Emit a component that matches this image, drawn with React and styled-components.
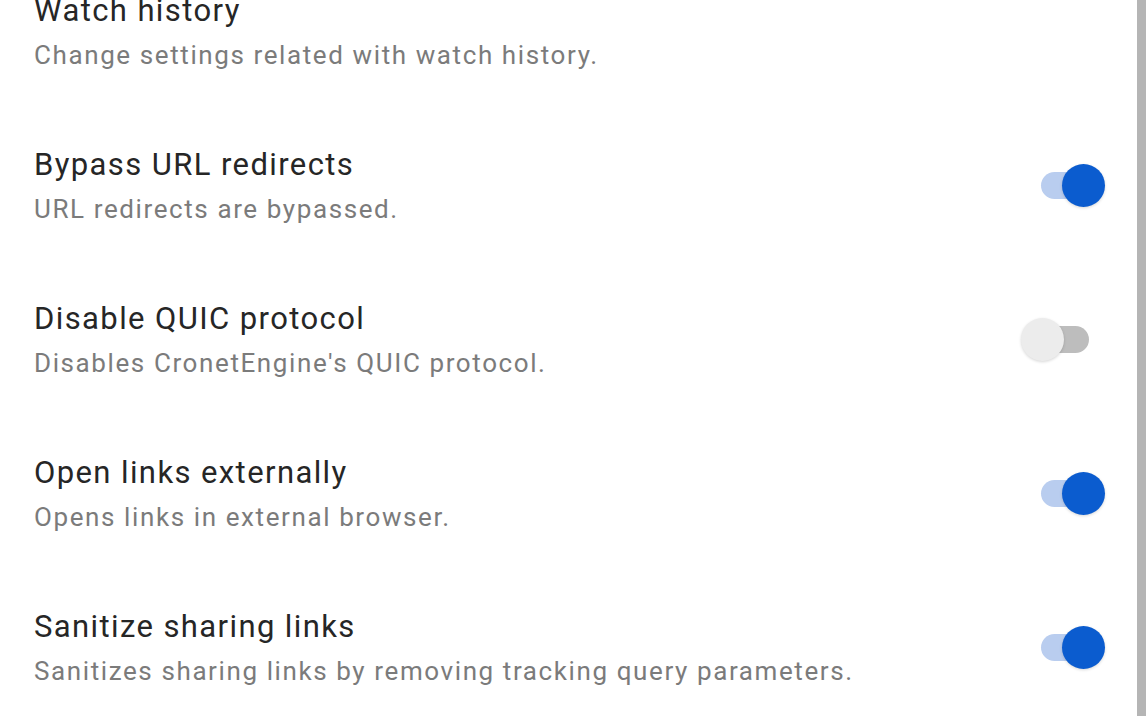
import React from "react";
import styled, { createGlobalStyle } from "styled-components";

const GlobalStyle = createGlobalStyle`
  html, body {
    margin: 0;
    padding: 0;
    background: #ffffff;
    overflow: hidden;
  }
  body {
    font-family: Roboto, "Noto Sans", "Liberation Sans", sans-serif;
  }
`;

const Screen = styled.div`
  display: flex;
  width: 1146px;
  height: 716px;
  overflow: hidden;
  background: #ffffff;
`;

const Content = styled.div`
  flex: 1;
  overflow: hidden;
`;

// right edge of the phone frame
const Edge = styled.div`
  width: 9px;
  background: #b5b5b5;
`;

// list is scrolled a little, first row is cut at the top
const List = styled.div`
  display: flex;
  flex-direction: column;
  margin-top: -46px;
`;

const Row = styled.div`
  display: flex;
  align-items: center;
  height: 154px;
  box-sizing: border-box;
  padding: 0 32px 0 34px;
`;

const Texts = styled.div`
  flex: 1;
  display: flex;
  flex-direction: column;
`;

const Title = styled.div`
  font-size: 31px;
  line-height: 36px;
  letter-spacing: 1.4px;
  color: #262626;
`;

const Summary = styled.div`
  margin-top: 11px;
  font-size: 26px;
  line-height: 30px;
  letter-spacing: 1.6px;
  color: #7b7b7b;
`;

const Switch = styled.div`
  position: relative;
  width: 66px;
  height: 43px;
  flex-shrink: 0;
`;

const Track = styled.div`
  position: absolute;
  left: 2px;
  top: 8px;
  width: 48px;
  height: 27px;
  border-radius: 14px;
  background: ${({ $on }) => ($on ? "#b9cdef" : "#bdbdbd")};
`;

const Thumb = styled.div`
  position: absolute;
  top: 0;
  left: ${({ $on }) => ($on ? "23px" : "-18px")};
  width: 43px;
  height: 43px;
  border-radius: 50%;
  background: ${({ $on }) => ($on ? "#0b5ccf" : "#ececec")};
  box-shadow: 0 1px 3px rgba(0, 0, 0, 0.16);
`;

const settings = [
  {
    title: "Watch history",
    summary: "Change settings related with watch history.",
  },
  {
    title: "Bypass URL redirects",
    summary: "URL redirects are bypassed.",
    toggle: true,
  },
  {
    title: "Disable QUIC protocol",
    summary: "Disables CronetEngine's QUIC protocol.",
    toggle: false,
  },
  {
    title: "Open links externally",
    summary: "Opens links in external browser.",
    toggle: true,
  },
  {
    title: "Sanitize sharing links",
    summary: "Sanitizes sharing links by removing tracking query parameters.",
    toggle: true,
  },
];

const App = () => {
  return (
    <>
      <GlobalStyle />
      <Screen>
        <Content>
          <List>
            {settings.map((s) => (
              <Row key={s.title}>
                <Texts>
                  <Title>{s.title}</Title>
                  <Summary>{s.summary}</Summary>
                </Texts>
                {s.toggle !== undefined && (
                  <Switch>
                    <Track $on={s.toggle} />
                    <Thumb $on={s.toggle} />
                  </Switch>
                )}
              </Row>
            ))}
          </List>
        </Content>
        <Edge />
      </Screen>
    </>
  );
};

export default App;
